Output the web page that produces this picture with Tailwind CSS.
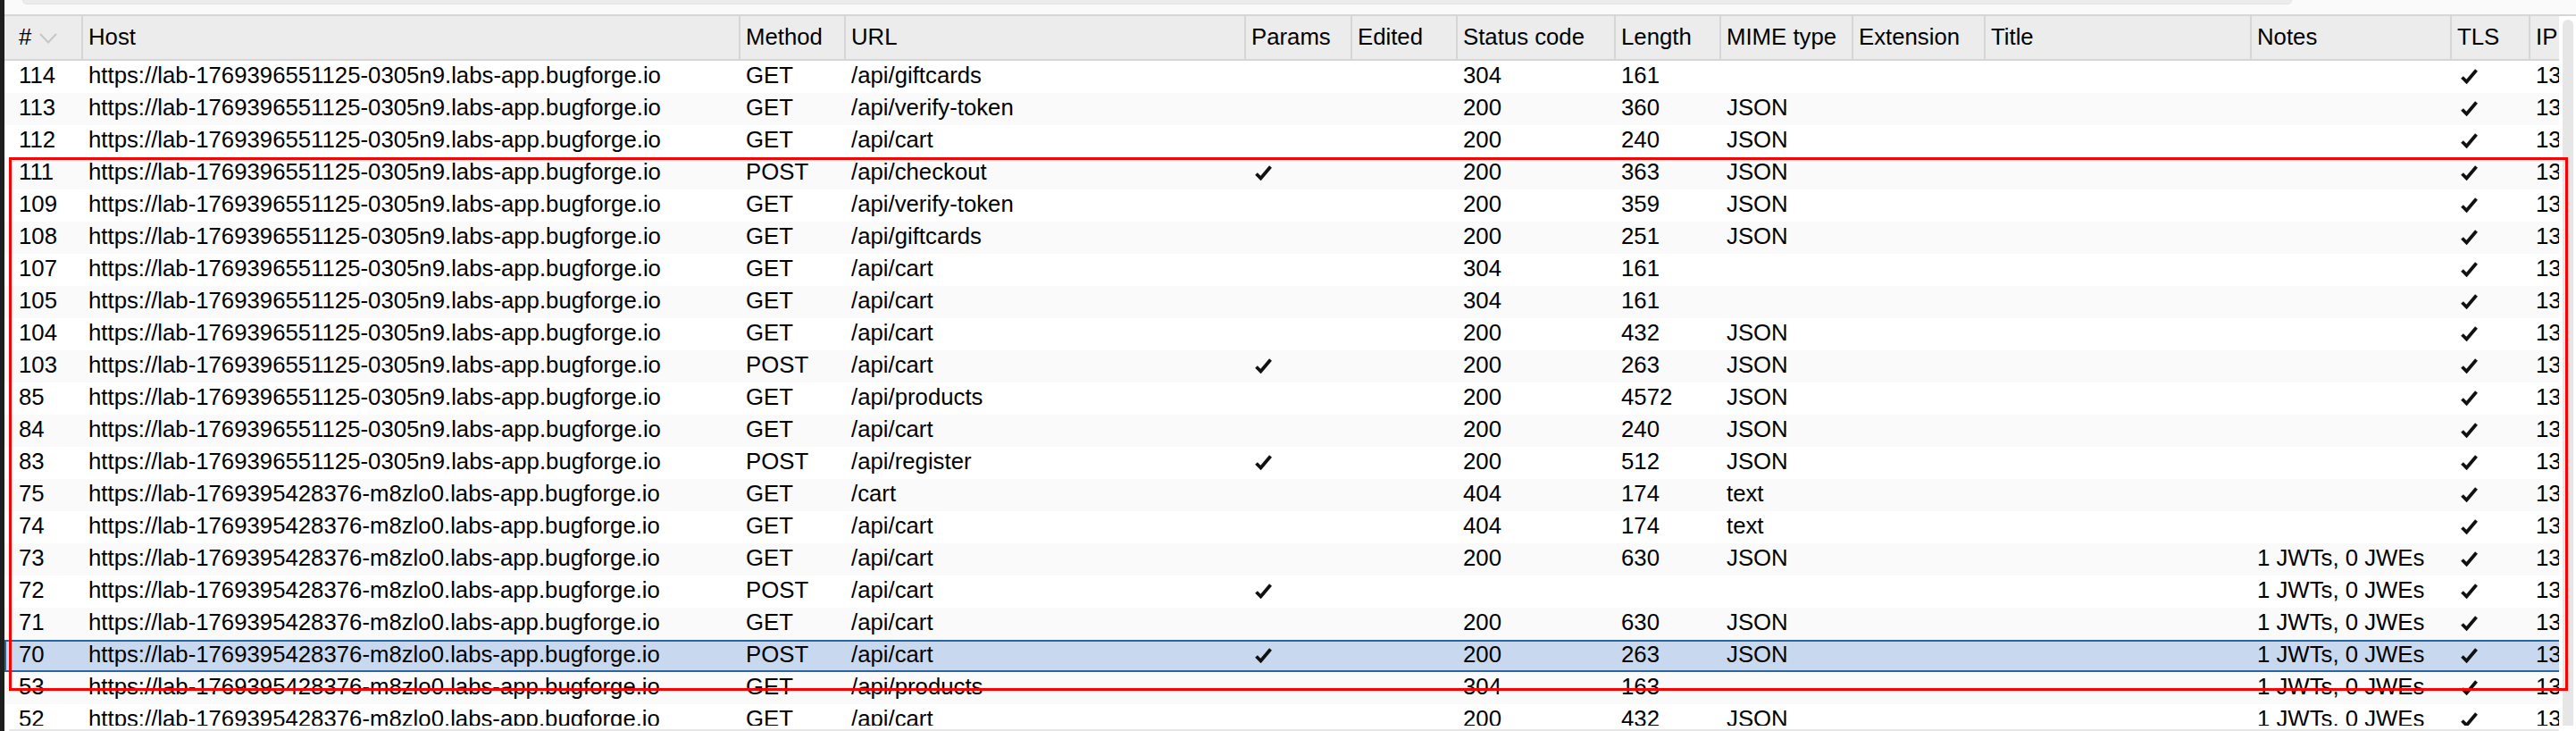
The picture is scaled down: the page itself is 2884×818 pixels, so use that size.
<!DOCTYPE html>
<html lang="en">
<head>
    <meta charset="UTF-8">
    <title>Proxy HTTP history</title>
    <script src="https://cdn.jsdelivr.net/npm/@tailwindcss/browser@4"></script>
</head>
<body class="relative flex h-[818px] w-[2884px] overflow-hidden bg-white font-['Liberation_Sans',Arial,sans-serif] text-[25.75px] text-black">
    <svg class="hidden">
        <symbol id="tick" viewBox="0 0 19 17"><path d="M1.5 9.5 L6.5 14.5 L17.5 1.5" fill="none" stroke="#111" stroke-width="3.8"/></symbol>
    </svg>

    <div class="w-[5px] shrink-0 bg-[#1e1e1e]"></div>

    <div class="flex w-[2879px] flex-col">
        <!-- strip above the table -->
        <div class="h-[16px] shrink-0 bg-[#fafafa] pl-[20px] pr-[318px]">
            <div class="h-[5px] rounded-b-[8px] border-x border-b border-[#e2e2e2] bg-[#ececec]"></div>
        </div>

        <div class="flex h-[796px] shrink-0 overflow-hidden">
            <div class="w-[2860px] shrink-0 overflow-hidden">
                <table class="w-[2860px] table-fixed border-separate border-spacing-0 leading-none">
                    <colgroup>
                        <col class="w-[86px]"><col class="w-[736px]"><col class="w-[118px]"><col class="w-[448px]"><col class="w-[119px]"><col class="w-[118px]"><col class="w-[177px]"><col class="w-[118px]"><col class="w-[148px]"><col class="w-[148px]"><col class="w-[298px]"><col class="w-[224px]"><col class="w-[88px]"><col class="w-[34px]">
                    </colgroup>
                    <thead class="[&_th]:h-[52px] [&_th]:overflow-hidden [&_th]:border-y-2 [&_th]:border-l-2 [&_th]:border-[#d6d6d6] [&_th]:bg-[#ececec] [&_th]:pb-[1px] [&_th]:pl-[6px] [&_th]:text-left [&_th]:font-normal [&_th]:whitespace-nowrap">
                        <tr>
                            <th class="!border-l-0 !pl-[16px]">
                                <span class="flex items-center gap-[9px]">#
                                    <svg class="mt-[3px] h-[12px] w-[20px]" viewBox="0 0 20 12"><path d="M1 1 L10 10.5 L19 1" fill="none" stroke="#c6c6c6" stroke-width="2"/></svg>
                                </span>
                            </th>
                            <th>Host</th><th>Method</th><th>URL</th><th>Params</th><th>Edited</th><th>Status code</th><th>Length</th><th>MIME type</th><th>Extension</th><th>Title</th><th>Notes</th><th>TLS</th><th>IP</th>
                        </tr>
                    </thead>
                    <tbody class="[&_td]:h-[36px] [&_td]:overflow-hidden [&_td]:p-0 [&_td]:pb-[2px] [&_td]:pl-[8px] [&_td]:whitespace-nowrap [&_td:first-child]:pl-[16px] [&_tr:nth-child(even)]:bg-[#fafafa] [&_svg]:ml-[4px] [&_svg]:block [&_svg]:h-[17px] [&_svg]:w-[19px]">
                        <tr><td>114</td><td>https://lab-1769396551125-0305n9.labs-app.bugforge.io</td><td>GET</td><td>/api/giftcards</td><td></td><td></td><td>304</td><td>161</td><td></td><td></td><td></td><td></td><td><svg><use href="#tick"/></svg></td><td>13</td></tr>
                        <tr><td>113</td><td>https://lab-1769396551125-0305n9.labs-app.bugforge.io</td><td>GET</td><td>/api/verify-token</td><td></td><td></td><td>200</td><td>360</td><td>JSON</td><td></td><td></td><td></td><td><svg><use href="#tick"/></svg></td><td>13</td></tr>
                        <tr><td>112</td><td>https://lab-1769396551125-0305n9.labs-app.bugforge.io</td><td>GET</td><td>/api/cart</td><td></td><td></td><td>200</td><td>240</td><td>JSON</td><td></td><td></td><td></td><td><svg><use href="#tick"/></svg></td><td>13</td></tr>
                        <tr><td>111</td><td>https://lab-1769396551125-0305n9.labs-app.bugforge.io</td><td>POST</td><td>/api/checkout</td><td><svg><use href="#tick"/></svg></td><td></td><td>200</td><td>363</td><td>JSON</td><td></td><td></td><td></td><td><svg><use href="#tick"/></svg></td><td>13</td></tr>
                        <tr><td>109</td><td>https://lab-1769396551125-0305n9.labs-app.bugforge.io</td><td>GET</td><td>/api/verify-token</td><td></td><td></td><td>200</td><td>359</td><td>JSON</td><td></td><td></td><td></td><td><svg><use href="#tick"/></svg></td><td>13</td></tr>
                        <tr><td>108</td><td>https://lab-1769396551125-0305n9.labs-app.bugforge.io</td><td>GET</td><td>/api/giftcards</td><td></td><td></td><td>200</td><td>251</td><td>JSON</td><td></td><td></td><td></td><td><svg><use href="#tick"/></svg></td><td>13</td></tr>
                        <tr><td>107</td><td>https://lab-1769396551125-0305n9.labs-app.bugforge.io</td><td>GET</td><td>/api/cart</td><td></td><td></td><td>304</td><td>161</td><td></td><td></td><td></td><td></td><td><svg><use href="#tick"/></svg></td><td>13</td></tr>
                        <tr><td>105</td><td>https://lab-1769396551125-0305n9.labs-app.bugforge.io</td><td>GET</td><td>/api/cart</td><td></td><td></td><td>304</td><td>161</td><td></td><td></td><td></td><td></td><td><svg><use href="#tick"/></svg></td><td>13</td></tr>
                        <tr><td>104</td><td>https://lab-1769396551125-0305n9.labs-app.bugforge.io</td><td>GET</td><td>/api/cart</td><td></td><td></td><td>200</td><td>432</td><td>JSON</td><td></td><td></td><td></td><td><svg><use href="#tick"/></svg></td><td>13</td></tr>
                        <tr><td>103</td><td>https://lab-1769396551125-0305n9.labs-app.bugforge.io</td><td>POST</td><td>/api/cart</td><td><svg><use href="#tick"/></svg></td><td></td><td>200</td><td>263</td><td>JSON</td><td></td><td></td><td></td><td><svg><use href="#tick"/></svg></td><td>13</td></tr>
                        <tr><td>85</td><td>https://lab-1769396551125-0305n9.labs-app.bugforge.io</td><td>GET</td><td>/api/products</td><td></td><td></td><td>200</td><td>4572</td><td>JSON</td><td></td><td></td><td></td><td><svg><use href="#tick"/></svg></td><td>13</td></tr>
                        <tr><td>84</td><td>https://lab-1769396551125-0305n9.labs-app.bugforge.io</td><td>GET</td><td>/api/cart</td><td></td><td></td><td>200</td><td>240</td><td>JSON</td><td></td><td></td><td></td><td><svg><use href="#tick"/></svg></td><td>13</td></tr>
                        <tr><td>83</td><td>https://lab-1769396551125-0305n9.labs-app.bugforge.io</td><td>POST</td><td>/api/register</td><td><svg><use href="#tick"/></svg></td><td></td><td>200</td><td>512</td><td>JSON</td><td></td><td></td><td></td><td><svg><use href="#tick"/></svg></td><td>13</td></tr>
                        <tr><td>75</td><td>https://lab-1769395428376-m8zlo0.labs-app.bugforge.io</td><td>GET</td><td>/cart</td><td></td><td></td><td>404</td><td>174</td><td>text</td><td></td><td></td><td></td><td><svg><use href="#tick"/></svg></td><td>13</td></tr>
                        <tr><td>74</td><td>https://lab-1769395428376-m8zlo0.labs-app.bugforge.io</td><td>GET</td><td>/api/cart</td><td></td><td></td><td>404</td><td>174</td><td>text</td><td></td><td></td><td></td><td><svg><use href="#tick"/></svg></td><td>13</td></tr>
                        <tr><td>73</td><td>https://lab-1769395428376-m8zlo0.labs-app.bugforge.io</td><td>GET</td><td>/api/cart</td><td></td><td></td><td>200</td><td>630</td><td>JSON</td><td></td><td></td><td>1 JWTs, 0 JWEs</td><td><svg><use href="#tick"/></svg></td><td>13</td></tr>
                        <tr><td>72</td><td>https://lab-1769395428376-m8zlo0.labs-app.bugforge.io</td><td>POST</td><td>/api/cart</td><td><svg><use href="#tick"/></svg></td><td></td><td></td><td></td><td></td><td></td><td></td><td>1 JWTs, 0 JWEs</td><td><svg><use href="#tick"/></svg></td><td>13</td></tr>
                        <tr><td>71</td><td>https://lab-1769395428376-m8zlo0.labs-app.bugforge.io</td><td>GET</td><td>/api/cart</td><td></td><td></td><td>200</td><td>630</td><td>JSON</td><td></td><td></td><td>1 JWTs, 0 JWEs</td><td><svg><use href="#tick"/></svg></td><td>13</td></tr>
                        <tr class="bg-[#c8d8ef] [&>td]:border-y-2 [&>td]:border-[#2a649f] [&>td:first-child]:border-l-2 [&>td:first-child]:!pl-[14px]"><td>70</td><td>https://lab-1769395428376-m8zlo0.labs-app.bugforge.io</td><td>POST</td><td>/api/cart</td><td><svg><use href="#tick"/></svg></td><td></td><td>200</td><td>263</td><td>JSON</td><td></td><td></td><td>1 JWTs, 0 JWEs</td><td><svg><use href="#tick"/></svg></td><td>13</td></tr>
                        <tr><td>53</td><td>https://lab-1769395428376-m8zlo0.labs-app.bugforge.io</td><td>GET</td><td>/api/products</td><td></td><td></td><td>304</td><td>163</td><td></td><td></td><td></td><td>1 JWTs, 0 JWEs</td><td><svg><use href="#tick"/></svg></td><td>13</td></tr>
                        <tr><td>52</td><td>https://lab-1769395428376-m8zlo0.labs-app.bugforge.io</td><td>GET</td><td>/api/cart</td><td></td><td></td><td>200</td><td>432</td><td>JSON</td><td></td><td></td><td>1 JWTs, 0 JWEs</td><td><svg><use href="#tick"/></svg></td><td>13</td></tr>
                    </tbody>
                </table>
            </div>
            <!-- vertical scrollbar -->
            <div class="flex-1 border-t-2 border-[#d6d6d6] pt-[4px] pl-[4px] pr-[3px]">
                <div class="h-full rounded-t-[6px] bg-[#e6e6e6]"></div>
            </div>
        </div>

        <!-- horizontal scrollbar -->
        <div class="h-[6px] shrink-0 pt-[4px] pl-[5px] pr-[19px]">
            <div class="h-[2px] rounded-t-[2px] bg-[#e6e6e6]"></div>
        </div>
    </div>

    <!-- red annotation box drawn over the table -->
    <div class="pointer-events-none absolute top-[176px] left-[10px] h-[597px] w-[2865px] border-[3px] border-[#ff0000]"></div>
</body>
</html>
